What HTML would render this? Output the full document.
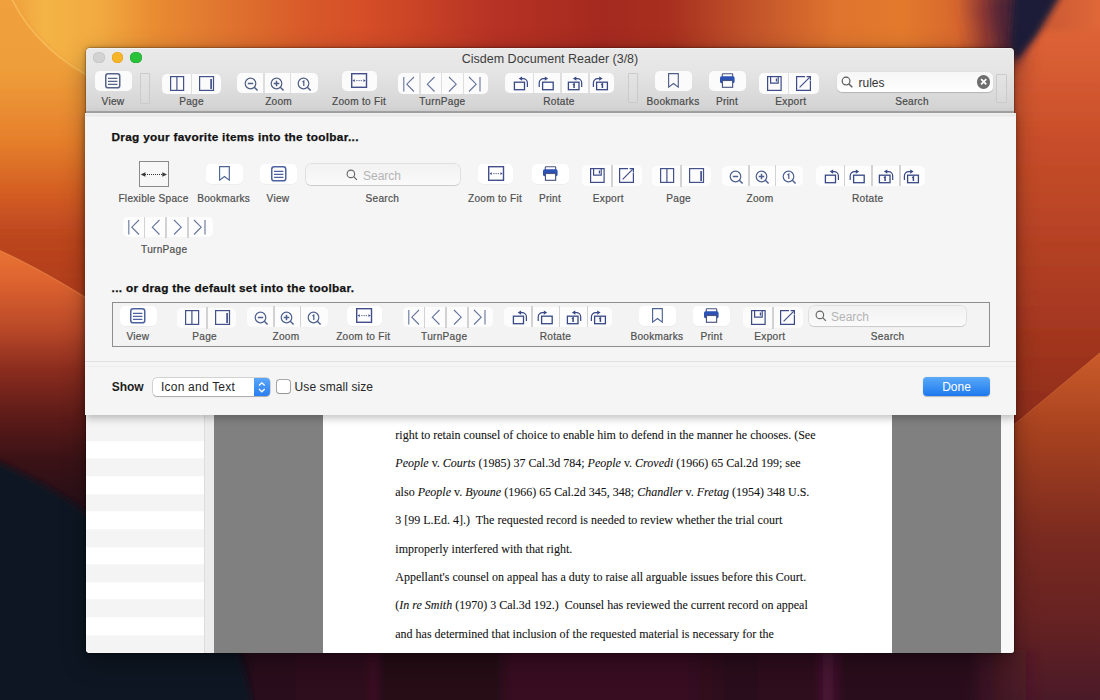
<!DOCTYPE html><html><head><meta charset="utf-8"><style>html,body{margin:0;padding:0;width:1100px;height:700px;overflow:hidden;position:relative;background:#c04020}*{box-sizing:border-box}</style></head><body>

<svg width="0" height="0" style="position:absolute">
<defs>
<symbol id="i-view" viewBox="0 0 16 16" overflow="visible"><rect x="0.75" y="0.75" width="14" height="14.1" rx="2.4" fill="none" stroke="currentColor" stroke-width="1.5"/><path d="M3 5.4H12.4M3 8.4H12.4M3 11.3H12.4" stroke="currentColor" stroke-width="1.2"/></symbol>
<symbol id="i-page1" viewBox="0 0 16 16" overflow="visible"><rect x="0.6" y="0.6" width="13" height="13.8" fill="none" stroke="currentColor" stroke-width="1.2"/><path d="M6.9 0.6V14.4" stroke="currentColor" stroke-width="1.2"/></symbol>
<symbol id="i-page2" viewBox="0 0 16 16" overflow="visible"><rect x="0.6" y="0.6" width="13.9" height="13.8" fill="none" stroke="currentColor" stroke-width="1.2"/><path d="M12.1 2.9V13" stroke="currentColor" stroke-width="1.7"/></symbol>
<symbol id="i-zoomout" viewBox="0 0 16 16" overflow="visible"><circle cx="6.5" cy="6.5" r="5.3" fill="none" stroke="currentColor" stroke-width="1.2"/><path d="M10.3 10.3L13.6 13.6" stroke="currentColor" stroke-width="1.45"/><path d="M3.8 6.5H9.2" stroke="currentColor" stroke-width="1.5"/></symbol>
<symbol id="i-zoomin" viewBox="0 0 16 16" overflow="visible"><circle cx="6.5" cy="6.5" r="5.3" fill="none" stroke="currentColor" stroke-width="1.2"/><path d="M10.3 10.3L13.6 13.6" stroke="currentColor" stroke-width="1.45"/><path d="M3.7 6.5H9.3M6.5 3.7V9.3" stroke="currentColor" stroke-width="1.5"/></symbol>
<symbol id="i-zoom1" viewBox="0 0 16 16" overflow="visible"><circle cx="6.5" cy="6.5" r="5.3" fill="none" stroke="currentColor" stroke-width="1.2"/><path d="M10.3 10.3L13.6 13.6" stroke="currentColor" stroke-width="1.45"/><path d="M5.5 4.9L6.8 4.1V9" fill="none" stroke="currentColor" stroke-width="1.25"/></symbol>
<symbol id="i-fit" viewBox="0 0 16 16" overflow="visible"><rect x="0.7" y="0.7" width="14.8" height="13.6" fill="none" stroke="currentColor" stroke-width="1.4"/><path d="M1.4 7.6L3.8 6.2V9Z M14.8 7.6L12.4 6.2V9Z" fill="currentColor"/><circle cx="5.9" cy="7.6" r="0.65" fill="currentColor"/><circle cx="8.1" cy="7.6" r="0.65" fill="currentColor"/><circle cx="10.3" cy="7.6" r="0.65" fill="currentColor"/></symbol>
<symbol id="i-first" viewBox="0 0 16 16" overflow="visible"><path d="M1.8 1V15.5" stroke="currentColor" stroke-width="1.1"/><path d="M12 1L4.8 8.2L12 15.5" fill="none" stroke="currentColor" stroke-width="1.1"/></symbol>
<symbol id="i-prev" viewBox="0 0 16 16" overflow="visible"><path d="M10.5 1L3.3 8.2L10.5 15.5" fill="none" stroke="currentColor" stroke-width="1.1"/></symbol>
<symbol id="i-next" viewBox="0 0 16 16" overflow="visible"><path d="M3 1L10.2 8.2L3 15.5" fill="none" stroke="currentColor" stroke-width="1.1"/></symbol>
<symbol id="i-last" viewBox="0 0 16 16" overflow="visible"><path d="M2 1L9.2 8.2L2 15.5" fill="none" stroke="currentColor" stroke-width="1.1"/><path d="M13 1V15.5" stroke="currentColor" stroke-width="1.1"/></symbol>
<symbol id="i-rotl" viewBox="0 0 16 16" overflow="visible"><rect x="2.4" y="7.2" width="10.1" height="7.5" fill="none" stroke="currentColor" stroke-width="1.3"/><path d="M9 3.6H11.1A4.3 4.3 0 0 1 15.4 7.9V12.1" fill="none" stroke="currentColor" stroke-width="1.2"/><path d="M6.7 3.6L10.1 1.5V5.7Z" fill="currentColor"/></symbol>
<symbol id="i-rotr" viewBox="0 0 16 16" overflow="visible"><rect x="4.6" y="7.2" width="10.6" height="7.5" fill="none" stroke="currentColor" stroke-width="1.3"/><path d="M1.2 12.1V7.9A4.3 4.3 0 0 1 5.5 3.6H7.4" fill="none" stroke="currentColor" stroke-width="1.2"/><path d="M10.2 3.6L6.8 1.5V5.7Z" fill="currentColor"/></symbol>
<symbol id="i-rotl1" viewBox="0 0 16 16" overflow="visible"><rect x="2.4" y="7.2" width="10.6" height="7.5" fill="none" stroke="currentColor" stroke-width="1.3"/><path d="M9 3.6H11.4A4.3 4.3 0 0 1 15.7 7.9V12.1" fill="none" stroke="currentColor" stroke-width="1.2"/><path d="M6.9 3.6L10.3 1.5V5.7Z" fill="currentColor"/><path d="M6.8 9.6L8.1 8.9V13" fill="none" stroke="currentColor" stroke-width="1.5"/></symbol>
<symbol id="i-rotr1" viewBox="0 0 16 16" overflow="visible"><rect x="4.6" y="7.2" width="10.8" height="7.5" fill="none" stroke="currentColor" stroke-width="1.3"/><path d="M1.4 12.1V7.9A4.3 4.3 0 0 1 5.7 3.6H7.6" fill="none" stroke="currentColor" stroke-width="1.2"/><path d="M10.6 3.6L7.2 1.5V5.7Z" fill="currentColor"/><path d="M9.1 9.6L10.4 8.9V13" fill="none" stroke="currentColor" stroke-width="1.5"/></symbol>
<symbol id="i-bookmark" viewBox="0 0 16 16" overflow="visible"><path d="M0.6 0.6H10.3V14.2L5.45 10.5L0.6 14.2Z" fill="none" stroke="currentColor" stroke-width="1.15" stroke-linejoin="miter"/></symbol>
<symbol id="i-print" viewBox="0 0 16 16" overflow="visible"><rect x="2.3" y="0.7" width="10.4" height="4" rx="0.6" fill="none" stroke="#4a5580" stroke-width="1.1"/><rect x="0" y="3.3" width="14.6" height="6.9" rx="1.6" fill="currentColor"/><rect x="2.45" y="7.5" width="10.2" height="6.8" fill="#ffffff" stroke="#4a5580" stroke-width="1.15"/></symbol>
<symbol id="i-save" viewBox="0 0 16 16" overflow="visible"><rect x="0.6" y="0.6" width="13.5" height="13.8" fill="none" stroke="currentColor" stroke-width="1.2"/><path d="M3.6 0.6V7.2H11.2V0.6" fill="none" stroke="currentColor" stroke-width="1.2"/><path d="M9.4 2.5V5.6" stroke="currentColor" stroke-width="1.2"/></symbol>
<symbol id="i-export" viewBox="0 0 16 16" overflow="visible"><path d="M9 0.6H0.6V14.4H14.4V4.6" fill="none" stroke="currentColor" stroke-width="1.2"/><path d="M3.6 11.4L13.6 1.4" stroke="currentColor" stroke-width="1.2"/><path d="M10.6 0.6H14.4V4" fill="none" stroke="currentColor" stroke-width="1.2"/></symbol>
<symbol id="i-mag" viewBox="0 0 16 16" overflow="visible"><circle cx="6.5" cy="6.5" r="5" fill="none" stroke="currentColor" stroke-width="1.5"/><path d="M10.2 10.2L14.5 14.5" stroke="currentColor" stroke-width="1.7"/></symbol>
</defs>
</svg>

<svg style="position:absolute;left:0;top:0" width="1100" height="700" viewBox="0 0 1100 700">
<defs>
<linearGradient id="gTop" x1="0" y1="0" x2="1100" y2="0" gradientUnits="userSpaceOnUse">
<stop offset="0" stop-color="#ee9a3a"/><stop offset="0.04" stop-color="#f4b446"/><stop offset="0.09" stop-color="#f2aa40"/><stop offset="0.14" stop-color="#e98c32"/>
<stop offset="0.2" stop-color="#e07630"/><stop offset="0.24" stop-color="#dc682c"/><stop offset="0.28" stop-color="#d8592a"/><stop offset="0.32" stop-color="#d65028"/><stop offset="0.36" stop-color="#cf4826"/><stop offset="0.45" stop-color="#b63224"/>
<stop offset="0.55" stop-color="#a5291f"/><stop offset="0.61" stop-color="#a8301f"/><stop offset="0.68" stop-color="#c0522a"/>
<stop offset="0.76" stop-color="#de742e"/><stop offset="0.82" stop-color="#e27a2c"/><stop offset="0.87" stop-color="#d8682e"/><stop offset="0.9" stop-color="#b44a30"/><stop offset="1" stop-color="#e06838"/>
</linearGradient>
<linearGradient id="gLeft" x1="0" y1="0" x2="0" y2="700" gradientUnits="userSpaceOnUse">
<stop offset="0" stop-color="#f0a03c"/><stop offset="0.1" stop-color="#ee9e3a"/><stop offset="0.2" stop-color="#e6802c"/><stop offset="0.28" stop-color="#d25c22"/><stop offset="0.34" stop-color="#bc461f"/><stop offset="0.42" stop-color="#b03c1e"/>
</linearGradient>
<linearGradient id="gLeft2" x1="0" y1="250" x2="0" y2="500" gradientUnits="userSpaceOnUse">
<stop offset="0" stop-color="#e87434"/><stop offset="0.12" stop-color="#de6430"/><stop offset="0.32" stop-color="#b84828"/><stop offset="0.48" stop-color="#8a2c1e"/><stop offset="0.68" stop-color="#5a1a18"/><stop offset="0.84" stop-color="#3a1216"/><stop offset="1" stop-color="#2a1018"/>
</linearGradient>
<linearGradient id="gRight" x1="0" y1="40" x2="0" y2="440" gradientUnits="userSpaceOnUse">
<stop offset="0" stop-color="#dc6236"/><stop offset="0.25" stop-color="#c84e2a"/><stop offset="0.7" stop-color="#a63820"/><stop offset="1" stop-color="#8a2a1a"/>
</linearGradient>
<linearGradient id="gRight2" x1="0" y1="340" x2="0" y2="700" gradientUnits="userSpaceOnUse">
<stop offset="0" stop-color="#d0602c"/><stop offset="0.25" stop-color="#a8421f"/><stop offset="0.55" stop-color="#7a2a20"/><stop offset="0.78" stop-color="#662222"/><stop offset="1" stop-color="#4a1a28"/>
</linearGradient>
<linearGradient id="gBot" x1="0" y1="0" x2="1100" y2="0" gradientUnits="userSpaceOnUse">
<stop offset="0" stop-color="#0a121e"/><stop offset="0.2" stop-color="#0c1420"/><stop offset="0.215" stop-color="#1a1020"/><stop offset="0.235" stop-color="#2c0e1c"/>
<stop offset="0.33" stop-color="#2e0e1c"/><stop offset="0.34" stop-color="#3a1222"/><stop offset="0.35" stop-color="#260a18"/><stop offset="0.45" stop-color="#260a18"/><stop offset="0.465" stop-color="#380c22"/>
<stop offset="0.62" stop-color="#380c22"/><stop offset="0.66" stop-color="#2c0c1c"/><stop offset="0.74" stop-color="#2e0c1e"/><stop offset="0.752" stop-color="#4a1434"/><stop offset="0.768" stop-color="#2a0c1c"/>
<stop offset="0.88" stop-color="#2c0e1c" stop-opacity="1"/><stop offset="0.95" stop-color="#4a1a28" stop-opacity="0"/><stop offset="1" stop-color="#4a1a28" stop-opacity="0"/>
</linearGradient>
<filter id="blur2" x="-20%" y="-20%" width="140%" height="140%"><feGaussianBlur stdDeviation="2"/></filter>
<filter id="blur3" x="-20%" y="-20%" width="140%" height="140%"><feGaussianBlur stdDeviation="3"/></filter>
<filter id="blur8" x="-50%" y="-50%" width="200%" height="200%"><feGaussianBlur stdDeviation="8"/></filter>
<filter id="blur12" x="-50%" y="-50%" width="200%" height="200%"><feGaussianBlur stdDeviation="12"/></filter>
</defs>
<rect x="0" y="0" width="1100" height="700" fill="url(#gTop)"/>
<path d="M-20 -10 H10 Q35 50 100 82 L120 92 V730 H-20 Z" fill="url(#gLeft)" filter="url(#blur2)"/>
<path d="M-20 242 Q40 266 120 320 V720 H-20Z" fill="url(#gLeft2)"/>
<path d="M-20 242 Q40 266 120 320" fill="none" stroke="#f39050" stroke-width="1.2" opacity="0.55"/>
<rect x="990" y="30" width="130" height="420" fill="url(#gRight)" filter="url(#blur3)"/>
<path d="M990 445 L1120 336 V720 H860 V640 H990Z" fill="url(#gRight2)"/>
<path d="M990 445 L1120 336" stroke="#e8844a" stroke-width="1" opacity="0.4"/>
<rect x="-20" y="650" width="1140" height="70" fill="url(#gBot)" filter="url(#blur2)"/>
<path d="M-40 447 Q40 474 120 537 L232 640 Q247 670 257 730 H-40Z" fill="#091322" filter="url(#blur3)"/>
<path d="M970 -10 L1030 -10 L1012 70 L990 70 Z" fill="#7e3234" filter="url(#blur12)"/>
<path d="M992 -10 L1030 -10 L1014 62 L1000 62 Z" fill="#4a2036" filter="url(#blur8)"/>
<path d="M1014 -10 L1064 -10 L1036 37 L1016 62 L1010 45 Z" fill="#1c1a38" filter="url(#blur3)"/>
<path d="M10 -5 Q35 50 100 82 L120 92" fill="none" stroke="#fbc868" stroke-width="1.6" opacity="0.6"/>
</svg>
<div style="position:absolute;left:86px;top:48px;width:928px;height:604.5px;border-radius:4px;box-shadow:0 0 0 0.5px rgba(0,0,0,0.3),0 0 5px rgba(0,0,0,0.3),0 8px 24px rgba(0,0,0,0.35)"></div>
<div style="position:absolute;left:86.00px;top:111.00px;width:928.00px;height:541.50px;background:#ffffff;border-radius:0 0 4px 4px;overflow:hidden"></div>
<div style="position:absolute;left:86px;top:111px;width:118px;height:541.5px;background:repeating-linear-gradient(to bottom,#f4f4f4 0px,#f4f4f4 17.65px,#ffffff 17.65px,#ffffff 35.3px);background-position:0 312.3px;border-radius:0 0 0 4px;border-bottom:1px solid #fafafa"></div>
<div style="position:absolute;left:204.00px;top:111.00px;width:1.00px;height:541.50px;background:#dcdcdc"></div>
<div style="position:absolute;left:205.00px;top:111.00px;width:9.00px;height:541.50px;background:#ececec"></div>
<div style="position:absolute;left:214.00px;top:111.00px;width:109.00px;height:541.50px;background:#808080"></div>
<div style="position:absolute;left:323.00px;top:111.00px;width:569.00px;height:541.50px;background:#ffffff"></div>
<div style="position:absolute;left:892.00px;top:111.00px;width:109.00px;height:541.50px;background:#808080"></div>
<div style="position:absolute;left:1001.00px;top:111.00px;width:13.00px;height:541.50px;background:#f8f8f8;border-radius:0 0 3px 0"></div>
<div style="position:absolute;left:395.30px;top:428.95px;font:normal 12px/12px 'Liberation Serif', serif;color:#111111;white-space:pre;-webkit-text-stroke:0.08px #111">right to retain counsel of choice to enable him to defend in the manner he chooses. (See</div>
<div style="position:absolute;left:395.30px;top:457.35px;font:normal 12px/12px 'Liberation Serif', serif;color:#111111;white-space:pre;-webkit-text-stroke:0.08px #111"><i>People</i> v. <i>Courts</i> (1985) 37 Cal.3d 784; <i>People</i> v. <i>Crovedi</i> (1966) 65 Cal.2d 199; see</div>
<div style="position:absolute;left:395.30px;top:485.75px;font:normal 12px/12px 'Liberation Serif', serif;color:#111111;white-space:pre;-webkit-text-stroke:0.08px #111">also <i>People</i> v. <i>Byoune</i> (1966) 65 Cal.2d 345, 348; <i>Chandler</i> v. <i>Fretag</i> (1954) 348 U.S.</div>
<div style="position:absolute;left:395.30px;top:514.15px;font:normal 12px/12px 'Liberation Serif', serif;color:#111111;white-space:pre;-webkit-text-stroke:0.08px #111">3 [99 L.Ed. 4].)  The requested record is needed to review whether the trial court</div>
<div style="position:absolute;left:395.30px;top:542.55px;font:normal 12px/12px 'Liberation Serif', serif;color:#111111;white-space:pre;-webkit-text-stroke:0.08px #111">improperly interfered with that right.</div>
<div style="position:absolute;left:395.30px;top:570.95px;font:normal 12px/12px 'Liberation Serif', serif;color:#111111;white-space:pre;-webkit-text-stroke:0.08px #111">Appellant&#39;s counsel on appeal has a duty to raise all arguable issues before this Court.</div>
<div style="position:absolute;left:395.30px;top:599.35px;font:normal 12px/12px 'Liberation Serif', serif;color:#111111;white-space:pre;-webkit-text-stroke:0.08px #111">(<i>In re Smith</i> (1970) 3 Cal.3d 192.)  Counsel has reviewed the current record on appeal</div>
<div style="position:absolute;left:395.30px;top:627.75px;font:normal 12px/12px 'Liberation Serif', serif;color:#111111;white-space:pre;-webkit-text-stroke:0.08px #111">and has determined that inclusion of the requested material is necessary for the</div>
<div style="position:absolute;left:86.00px;top:48.00px;width:928.00px;height:65.00px;background:linear-gradient(to bottom,#f6f6f6 0px,#e9e9e9 1.5px,#e6e6e6 20px,#d9d9d9 50px,#d2d2d2 63px);border-radius:4px 4px 0 0;border-bottom:2px solid #a6a6a6"></div>
<div style="position:absolute;left:93.45px;top:51.75px;width:11.5px;height:11.5px;border-radius:50%;background:#d2d2d2;box-shadow:inset 0 0 0 0.6px #c2c2c2"></div>
<div style="position:absolute;left:111.85px;top:51.75px;width:11.5px;height:11.5px;border-radius:50%;background:#f7b52a;box-shadow:inset 0 0 0 0.6px #e6a01c"></div>
<div style="position:absolute;left:130.25px;top:51.75px;width:11.5px;height:11.5px;border-radius:50%;background:#2bc23b;box-shadow:inset 0 0 0 0.6px #20a82e"></div>
<div style="position:absolute;left:350.00px;width:400px;top:52.72px;font:normal 12.5px/12.5px 'Liberation Sans', sans-serif;color:#3c3c3c;text-align:center;white-space:nowrap;">Cisdem Document Reader (3/8)</div>
<div style="position:absolute;left:95.00px;top:71.00px;width:36.50px;height:20.00px;background:#fbfbfb;border-radius:5px;"></div>
<svg style="position:absolute;left:105.20px;top:73.00px;overflow:visible" width="16.00" height="16.00" viewBox="0 0 16 16"><use href="#i-view" style="color:#56648a"/></svg>
<div style="position:absolute;left:-87.00px;width:400px;top:96.75px;font:normal 10.1px/10.1px 'Liberation Sans', sans-serif;color:#4a4a4a;text-align:center;white-space:nowrap;-webkit-text-stroke:0.2px #4a4a4a;letter-spacing:0.28px">View</div>
<div style="position:absolute;left:162.00px;top:73.50px;width:59.00px;height:20.50px;background:#fbfbfb;border-radius:5px;"></div>
<div style="position:absolute;left:190.85px;top:73.50px;width:1.30px;height:20.50px;background:#dedede"></div>
<svg style="position:absolute;left:169.75px;top:76.00px;overflow:visible" width="16.00" height="16.00" viewBox="0 0 16 16"><use href="#i-page1" style="color:#44528a"/></svg>
<svg style="position:absolute;left:199.25px;top:76.00px;overflow:visible" width="16.00" height="16.00" viewBox="0 0 16 16"><use href="#i-page2" style="color:#44528a"/></svg>
<div style="position:absolute;left:-8.50px;width:400px;top:96.75px;font:normal 10.1px/10.1px 'Liberation Sans', sans-serif;color:#4a4a4a;text-align:center;white-space:nowrap;-webkit-text-stroke:0.2px #4a4a4a;letter-spacing:0.28px">Page</div>
<div style="position:absolute;left:237.00px;top:73.00px;width:81.00px;height:20.00px;background:#fbfbfb;border-radius:5px;"></div>
<div style="position:absolute;left:263.35px;top:73.00px;width:1.30px;height:20.00px;background:#dedede"></div>
<div style="position:absolute;left:289.85px;top:73.00px;width:1.30px;height:20.00px;background:#dedede"></div>
<svg style="position:absolute;left:244.20px;top:76.60px;overflow:visible" width="16.00" height="16.00" viewBox="0 0 16 16"><use href="#i-zoomout" style="color:#4f5e86"/></svg>
<svg style="position:absolute;left:270.00px;top:76.60px;overflow:visible" width="16.00" height="16.00" viewBox="0 0 16 16"><use href="#i-zoomin" style="color:#4f5e86"/></svg>
<svg style="position:absolute;left:296.80px;top:76.60px;overflow:visible" width="16.00" height="16.00" viewBox="0 0 16 16"><use href="#i-zoom1" style="color:#4f5e86"/></svg>
<div style="position:absolute;left:78.60px;width:400px;top:96.75px;font:normal 10.1px/10.1px 'Liberation Sans', sans-serif;color:#4a4a4a;text-align:center;white-space:nowrap;-webkit-text-stroke:0.2px #4a4a4a;letter-spacing:0.28px">Zoom</div>
<div style="position:absolute;left:341.50px;top:71.10px;width:35.00px;height:19.80px;background:#fbfbfb;border-radius:5px;"></div>
<svg style="position:absolute;left:351.10px;top:73.30px;overflow:visible" width="16.00" height="16.00" viewBox="0 0 16 16"><use href="#i-fit" style="color:#424f8a"/></svg>
<div style="position:absolute;left:159.00px;width:400px;top:96.75px;font:normal 10.1px/10.1px 'Liberation Sans', sans-serif;color:#4a4a4a;text-align:center;white-space:nowrap;-webkit-text-stroke:0.2px #4a4a4a;letter-spacing:0.28px">Zoom to Fit</div>
<div style="position:absolute;left:398.00px;top:73.30px;width:90.00px;height:20.40px;background:#fbfbfb;border-radius:5px;"></div>
<div style="position:absolute;left:419.35px;top:73.30px;width:1.30px;height:20.40px;background:#dedede"></div>
<div style="position:absolute;left:440.85px;top:73.30px;width:1.30px;height:20.40px;background:#dedede"></div>
<div style="position:absolute;left:462.85px;top:73.30px;width:1.30px;height:20.40px;background:#dedede"></div>
<svg style="position:absolute;left:402.00px;top:75.50px;overflow:visible" width="16.00" height="16.00" viewBox="0 0 16 16"><use href="#i-first" style="color:#66749a"/></svg>
<svg style="position:absolute;left:424.00px;top:75.50px;overflow:visible" width="16.00" height="16.00" viewBox="0 0 16 16"><use href="#i-prev" style="color:#66749a"/></svg>
<svg style="position:absolute;left:446.00px;top:75.50px;overflow:visible" width="16.00" height="16.00" viewBox="0 0 16 16"><use href="#i-next" style="color:#66749a"/></svg>
<svg style="position:absolute;left:467.00px;top:75.50px;overflow:visible" width="16.00" height="16.00" viewBox="0 0 16 16"><use href="#i-last" style="color:#66749a"/></svg>
<div style="position:absolute;left:242.40px;width:400px;top:96.75px;font:normal 10.1px/10.1px 'Liberation Sans', sans-serif;color:#4a4a4a;text-align:center;white-space:nowrap;-webkit-text-stroke:0.2px #4a4a4a;letter-spacing:0.28px">TurnPage</div>
<div style="position:absolute;left:505.00px;top:73.00px;width:108.50px;height:20.30px;background:#fbfbfb;border-radius:5px;"></div>
<div style="position:absolute;left:532.65px;top:73.00px;width:1.30px;height:20.30px;background:#dedede"></div>
<div style="position:absolute;left:560.35px;top:73.00px;width:1.30px;height:20.30px;background:#dedede"></div>
<div style="position:absolute;left:588.35px;top:73.00px;width:1.30px;height:20.30px;background:#dedede"></div>
<svg style="position:absolute;left:512.00px;top:75.00px;overflow:visible" width="16.00" height="16.00" viewBox="0 0 16 16"><use href="#i-rotl" style="color:#374885"/></svg>
<svg style="position:absolute;left:538.00px;top:75.00px;overflow:visible" width="16.00" height="16.00" viewBox="0 0 16 16"><use href="#i-rotr" style="color:#374885"/></svg>
<svg style="position:absolute;left:566.30px;top:75.00px;overflow:visible" width="16.00" height="16.00" viewBox="0 0 16 16"><use href="#i-rotl1" style="color:#374885"/></svg>
<svg style="position:absolute;left:591.50px;top:75.00px;overflow:visible" width="16.00" height="16.00" viewBox="0 0 16 16"><use href="#i-rotr1" style="color:#374885"/></svg>
<div style="position:absolute;left:359.00px;width:400px;top:96.75px;font:normal 10.1px/10.1px 'Liberation Sans', sans-serif;color:#4a4a4a;text-align:center;white-space:nowrap;-webkit-text-stroke:0.2px #4a4a4a;letter-spacing:0.28px">Rotate</div>
<div style="position:absolute;left:655.00px;top:71.00px;width:37.00px;height:20.00px;background:#fbfbfb;border-radius:5px;"></div>
<svg style="position:absolute;left:668.20px;top:73.30px;overflow:visible" width="16.00" height="16.00" viewBox="0 0 16 16"><use href="#i-bookmark" style="color:#4f6088"/></svg>
<div style="position:absolute;left:473.00px;width:400px;top:96.75px;font:normal 10.1px/10.1px 'Liberation Sans', sans-serif;color:#4a4a4a;text-align:center;white-space:nowrap;-webkit-text-stroke:0.2px #4a4a4a;letter-spacing:0.28px">Bookmarks</div>
<div style="position:absolute;left:709.00px;top:71.00px;width:37.00px;height:20.00px;background:#fbfbfb;border-radius:5px;"></div>
<svg style="position:absolute;left:720.20px;top:73.00px;overflow:visible" width="16.00" height="16.00" viewBox="0 0 16 16"><use href="#i-print" style="color:#2c52b6"/></svg>
<div style="position:absolute;left:527.00px;width:400px;top:96.75px;font:normal 10.1px/10.1px 'Liberation Sans', sans-serif;color:#4a4a4a;text-align:center;white-space:nowrap;-webkit-text-stroke:0.2px #4a4a4a;letter-spacing:0.28px">Print</div>
<div style="position:absolute;left:759.00px;top:73.00px;width:59.50px;height:21.30px;background:#fbfbfb;border-radius:5px;"></div>
<div style="position:absolute;left:788.15px;top:73.00px;width:1.30px;height:21.30px;background:#dedede"></div>
<svg style="position:absolute;left:767.10px;top:76.10px;overflow:visible" width="16.00" height="16.00" viewBox="0 0 16 16"><use href="#i-save" style="color:#3d4c88"/></svg>
<svg style="position:absolute;left:796.00px;top:76.10px;overflow:visible" width="16.00" height="16.00" viewBox="0 0 16 16"><use href="#i-export" style="color:#3d4c88"/></svg>
<div style="position:absolute;left:590.80px;width:400px;top:96.75px;font:normal 10.1px/10.1px 'Liberation Sans', sans-serif;color:#4a4a4a;text-align:center;white-space:nowrap;-webkit-text-stroke:0.2px #4a4a4a;letter-spacing:0.28px">Export</div>
<div style="position:absolute;left:140.00px;top:73.00px;width:10.00px;height:30.50px;border:1px solid #cbcbcb;background:rgba(255,255,255,0.06);border-radius:1px"></div>
<div style="position:absolute;left:628.30px;top:73.00px;width:9.70px;height:30.40px;border:1px solid #cbcbcb;background:rgba(255,255,255,0.06);border-radius:1px"></div>
<div style="position:absolute;left:836.5px;top:71.8px;width:156px;height:20.2px;border-radius:5px;background:linear-gradient(#f6f6f6,#ffffff);box-shadow:0 0.5px 1px rgba(0,0,0,0.18)"></div>
<svg style="position:absolute;left:841.26px;top:76.06px" width="12.48" height="12.48" viewBox="0 0 16 16"><use href="#i-mag" style="color:#555555"/></svg>
<div style="position:absolute;left:858.50px;top:76.64px;font:normal 12px/12px 'Liberation Sans', sans-serif;color:#333333;white-space:pre;">rules</div>
<div style="position:absolute;left:976.7px;top:75.4px;width:13.4px;height:13.4px;border-radius:50%;background:#6e6e6e"></div>
<svg style="position:absolute;left:976.7px;top:75.4px" width="13.4" height="13.4" viewBox="0 0 14 14"><path d="M4.3 4.3L9.7 9.7M9.7 4.3L4.3 9.7" stroke="#fff" stroke-width="1.8"/></svg>
<div style="position:absolute;left:712.00px;width:400px;top:96.75px;font:normal 10.1px/10.1px 'Liberation Sans', sans-serif;color:#4a4a4a;text-align:center;white-space:nowrap;-webkit-text-stroke:0.2px #4a4a4a;letter-spacing:0.28px">Search</div>
<div style="position:absolute;left:995.50px;top:73.50px;width:11.50px;height:29.50px;border:1px solid #cbcbcb;background:rgba(255,255,255,0.06);border-radius:1px"></div>
<div style="position:absolute;left:85px;top:113px;width:930.5px;height:301.8px;background:linear-gradient(#ececec 0px,#f2f2f2 1px,#e8e8e8 2.5px,#f5f5f5 4px,#f5f5f5 100%);box-shadow:0 3px 8px rgba(0,0,0,0.25)"></div>
<div style="position:absolute;left:111.50px;top:132.01px;font:bold 11.8px/11.8px 'Liberation Sans', sans-serif;color:#111111;white-space:pre;letter-spacing:0.3px;-webkit-text-stroke:0.25px #111">Drag your favorite items into the toolbar...</div>
<div style="position:absolute;left:139px;top:160.7px;width:29.7px;height:26.4px;border:1px solid #8a8a8a;background:#f7f7f7"></div>
<svg style="position:absolute;left:139px;top:160.7px" width="30" height="27" viewBox="0 0 30 27"><path d="M6 13.5H24" stroke="#333" stroke-width="1.1" stroke-dasharray="1 1"/><path d="M1.7 13.5L6.4 11.3V15.7Z M28 13.5L23.3 11.3V15.7Z" fill="#3a3a3a"/></svg>
<div style="position:absolute;left:-46.50px;width:400px;top:193.65px;font:normal 10.1px/10.1px 'Liberation Sans', sans-serif;color:#505050;text-align:center;white-space:nowrap;-webkit-text-stroke:0.2px #505050;letter-spacing:0.28px">Flexible Space</div>
<div style="position:absolute;left:205.60px;top:164.10px;width:37.00px;height:20.00px;background:#ffffff;border-radius:5px;box-shadow:0 0.5px 0.5px rgba(0,0,0,0.06)"></div>
<svg style="position:absolute;left:218.80px;top:166.40px;overflow:visible" width="16.00" height="16.00" viewBox="0 0 16 16"><use href="#i-bookmark" style="color:#4d6494"/></svg>
<div style="position:absolute;left:23.70px;width:400px;top:193.65px;font:normal 10.1px/10.1px 'Liberation Sans', sans-serif;color:#505050;text-align:center;white-space:nowrap;-webkit-text-stroke:0.2px #505050;letter-spacing:0.28px">Bookmarks</div>
<div style="position:absolute;left:260.40px;top:163.90px;width:36.50px;height:20.00px;background:#ffffff;border-radius:5px;box-shadow:0 0.5px 0.5px rgba(0,0,0,0.06)"></div>
<svg style="position:absolute;left:270.60px;top:165.90px;overflow:visible" width="16.00" height="16.00" viewBox="0 0 16 16"><use href="#i-view" style="color:#4d62a0"/></svg>
<div style="position:absolute;left:78.00px;width:400px;top:193.65px;font:normal 10.1px/10.1px 'Liberation Sans', sans-serif;color:#505050;text-align:center;white-space:nowrap;-webkit-text-stroke:0.2px #505050;letter-spacing:0.28px">View</div>
<div style="position:absolute;left:478.40px;top:163.80px;width:35.00px;height:19.80px;background:#ffffff;border-radius:5px;box-shadow:0 0.5px 0.5px rgba(0,0,0,0.06)"></div>
<svg style="position:absolute;left:488.00px;top:166.00px;overflow:visible" width="16.00" height="16.00" viewBox="0 0 16 16"><use href="#i-fit" style="color:#424f8a"/></svg>
<div style="position:absolute;left:295.00px;width:400px;top:193.65px;font:normal 10.1px/10.1px 'Liberation Sans', sans-serif;color:#505050;text-align:center;white-space:nowrap;-webkit-text-stroke:0.2px #505050;letter-spacing:0.28px">Zoom to Fit</div>
<div style="position:absolute;left:531.60px;top:163.90px;width:37.00px;height:20.00px;background:#ffffff;border-radius:5px;box-shadow:0 0.5px 0.5px rgba(0,0,0,0.06)"></div>
<svg style="position:absolute;left:542.80px;top:165.90px;overflow:visible" width="16.00" height="16.00" viewBox="0 0 16 16"><use href="#i-print" style="color:#2c52b6"/></svg>
<div style="position:absolute;left:350.00px;width:400px;top:193.65px;font:normal 10.1px/10.1px 'Liberation Sans', sans-serif;color:#505050;text-align:center;white-space:nowrap;-webkit-text-stroke:0.2px #505050;letter-spacing:0.28px">Print</div>
<div style="position:absolute;left:582.00px;top:165.20px;width:59.50px;height:21.30px;background:rgba(255,255,255,0.75);border-radius:5px;"></div>
<div style="position:absolute;left:611.00px;top:164.70px;width:1.60px;height:22.30px;background:#d2d2d2"></div>
<svg style="position:absolute;left:590.10px;top:168.30px;overflow:visible" width="16.00" height="16.00" viewBox="0 0 16 16"><use href="#i-save" style="color:#3d4c88"/></svg>
<svg style="position:absolute;left:619.00px;top:168.30px;overflow:visible" width="16.00" height="16.00" viewBox="0 0 16 16"><use href="#i-export" style="color:#3d4c88"/></svg>
<div style="position:absolute;left:408.30px;width:400px;top:193.65px;font:normal 10.1px/10.1px 'Liberation Sans', sans-serif;color:#505050;text-align:center;white-space:nowrap;-webkit-text-stroke:0.2px #505050;letter-spacing:0.28px">Export</div>
<div style="position:absolute;left:651.75px;top:165.80px;width:59.00px;height:20.50px;background:rgba(255,255,255,0.75);border-radius:5px;"></div>
<div style="position:absolute;left:680.45px;top:165.30px;width:1.60px;height:21.50px;background:#d2d2d2"></div>
<svg style="position:absolute;left:659.50px;top:168.30px;overflow:visible" width="16.00" height="16.00" viewBox="0 0 16 16"><use href="#i-page1" style="color:#44528a"/></svg>
<svg style="position:absolute;left:689.00px;top:168.30px;overflow:visible" width="16.00" height="16.00" viewBox="0 0 16 16"><use href="#i-page2" style="color:#44528a"/></svg>
<div style="position:absolute;left:478.60px;width:400px;top:193.65px;font:normal 10.1px/10.1px 'Liberation Sans', sans-serif;color:#505050;text-align:center;white-space:nowrap;-webkit-text-stroke:0.2px #505050;letter-spacing:0.28px">Page</div>
<div style="position:absolute;left:721.80px;top:165.90px;width:81.00px;height:20.00px;background:rgba(255,255,255,0.75);border-radius:5px;"></div>
<div style="position:absolute;left:748.00px;top:165.40px;width:1.60px;height:21.00px;background:#d2d2d2"></div>
<div style="position:absolute;left:774.50px;top:165.40px;width:1.60px;height:21.00px;background:#d2d2d2"></div>
<svg style="position:absolute;left:729.00px;top:169.50px;overflow:visible" width="16.00" height="16.00" viewBox="0 0 16 16"><use href="#i-zoomout" style="color:#4d6090"/></svg>
<svg style="position:absolute;left:754.80px;top:169.50px;overflow:visible" width="16.00" height="16.00" viewBox="0 0 16 16"><use href="#i-zoomin" style="color:#4d6090"/></svg>
<svg style="position:absolute;left:781.60px;top:169.50px;overflow:visible" width="16.00" height="16.00" viewBox="0 0 16 16"><use href="#i-zoom1" style="color:#4d6090"/></svg>
<div style="position:absolute;left:560.00px;width:400px;top:193.65px;font:normal 10.1px/10.1px 'Liberation Sans', sans-serif;color:#505050;text-align:center;white-space:nowrap;-webkit-text-stroke:0.2px #505050;letter-spacing:0.28px">Zoom</div>
<div style="position:absolute;left:816.00px;top:165.50px;width:108.50px;height:20.30px;background:rgba(255,255,255,0.75);border-radius:5px;"></div>
<div style="position:absolute;left:843.50px;top:165.00px;width:1.60px;height:21.30px;background:#d2d2d2"></div>
<div style="position:absolute;left:871.20px;top:165.00px;width:1.60px;height:21.30px;background:#d2d2d2"></div>
<div style="position:absolute;left:899.20px;top:165.00px;width:1.60px;height:21.30px;background:#d2d2d2"></div>
<svg style="position:absolute;left:823.00px;top:167.50px;overflow:visible" width="16.00" height="16.00" viewBox="0 0 16 16"><use href="#i-rotl" style="color:#374885"/></svg>
<svg style="position:absolute;left:849.00px;top:167.50px;overflow:visible" width="16.00" height="16.00" viewBox="0 0 16 16"><use href="#i-rotr" style="color:#374885"/></svg>
<svg style="position:absolute;left:877.30px;top:167.50px;overflow:visible" width="16.00" height="16.00" viewBox="0 0 16 16"><use href="#i-rotl1" style="color:#374885"/></svg>
<svg style="position:absolute;left:902.50px;top:167.50px;overflow:visible" width="16.00" height="16.00" viewBox="0 0 16 16"><use href="#i-rotr1" style="color:#374885"/></svg>
<div style="position:absolute;left:667.70px;width:400px;top:193.65px;font:normal 10.1px/10.1px 'Liberation Sans', sans-serif;color:#505050;text-align:center;white-space:nowrap;-webkit-text-stroke:0.2px #505050;letter-spacing:0.28px">Rotate</div>
<div style="position:absolute;left:305.8px;top:164.2px;width:153.8px;height:21.3px;border-radius:5px;background:linear-gradient(#f2f2f2,#fafafa);box-shadow:0 0 0 0.5px rgba(0,0,0,0.15),0 0.5px 1px rgba(0,0,0,0.1)"></div>
<svg style="position:absolute;left:346.00px;top:169.20px" width="12.00" height="12.00" viewBox="0 0 16 16"><use href="#i-mag" style="color:#666666"/></svg>
<div style="position:absolute;left:363.00px;top:169.64px;font:normal 12px/12px 'Liberation Sans', sans-serif;color:#b4b4b4;white-space:pre;">Search</div>
<div style="position:absolute;left:182.40px;width:400px;top:193.65px;font:normal 10.1px/10.1px 'Liberation Sans', sans-serif;color:#505050;text-align:center;white-space:nowrap;-webkit-text-stroke:0.2px #505050;letter-spacing:0.28px">Search</div>
<div style="position:absolute;left:122.60px;top:217.10px;width:90.00px;height:20.40px;background:rgba(255,255,255,0.75);border-radius:5px;"></div>
<div style="position:absolute;left:143.80px;top:216.60px;width:1.60px;height:21.40px;background:#d2d2d2"></div>
<div style="position:absolute;left:165.30px;top:216.60px;width:1.60px;height:21.40px;background:#d2d2d2"></div>
<div style="position:absolute;left:187.30px;top:216.60px;width:1.60px;height:21.40px;background:#d2d2d2"></div>
<svg style="position:absolute;left:126.60px;top:219.30px;overflow:visible" width="16.00" height="16.00" viewBox="0 0 16 16"><use href="#i-first" style="color:#66749a"/></svg>
<svg style="position:absolute;left:148.60px;top:219.30px;overflow:visible" width="16.00" height="16.00" viewBox="0 0 16 16"><use href="#i-prev" style="color:#66749a"/></svg>
<svg style="position:absolute;left:170.60px;top:219.30px;overflow:visible" width="16.00" height="16.00" viewBox="0 0 16 16"><use href="#i-next" style="color:#66749a"/></svg>
<svg style="position:absolute;left:191.60px;top:219.30px;overflow:visible" width="16.00" height="16.00" viewBox="0 0 16 16"><use href="#i-last" style="color:#66749a"/></svg>
<div style="position:absolute;left:-35.80px;width:400px;top:245.05px;font:normal 10.1px/10.1px 'Liberation Sans', sans-serif;color:#505050;text-align:center;white-space:nowrap;-webkit-text-stroke:0.2px #505050;letter-spacing:0.28px">TurnPage</div>
<div style="position:absolute;left:111.60px;top:282.81px;font:bold 11.8px/11.8px 'Liberation Sans', sans-serif;color:#111111;white-space:pre;letter-spacing:0.31px;-webkit-text-stroke:0.25px #111">... or drag the default set into the toolbar.</div>
<div style="position:absolute;left:111.5px;top:302.1px;width:878px;height:44.6px;border:1.2px solid #8e8e8e;background:#f3f3f3"></div>
<div style="position:absolute;left:120.20px;top:306.00px;width:36.50px;height:20.00px;background:#ffffff;border-radius:5px;box-shadow:0 0.5px 0.5px rgba(0,0,0,0.06)"></div>
<svg style="position:absolute;left:130.40px;top:308.00px;overflow:visible" width="16.00" height="16.00" viewBox="0 0 16 16"><use href="#i-view" style="color:#4d62a0"/></svg>
<div style="position:absolute;left:-62.20px;width:400px;top:331.65px;font:normal 10.1px/10.1px 'Liberation Sans', sans-serif;color:#505050;text-align:center;white-space:nowrap;-webkit-text-stroke:0.2px #505050;letter-spacing:0.28px">View</div>
<div style="position:absolute;left:177.25px;top:307.50px;width:59.00px;height:20.50px;background:rgba(255,255,255,0.75);border-radius:5px;"></div>
<div style="position:absolute;left:205.95px;top:307.00px;width:1.60px;height:21.50px;background:#d2d2d2"></div>
<svg style="position:absolute;left:185.00px;top:310.00px;overflow:visible" width="16.00" height="16.00" viewBox="0 0 16 16"><use href="#i-page1" style="color:#44528a"/></svg>
<svg style="position:absolute;left:214.50px;top:310.00px;overflow:visible" width="16.00" height="16.00" viewBox="0 0 16 16"><use href="#i-page2" style="color:#44528a"/></svg>
<div style="position:absolute;left:4.60px;width:400px;top:331.65px;font:normal 10.1px/10.1px 'Liberation Sans', sans-serif;color:#505050;text-align:center;white-space:nowrap;-webkit-text-stroke:0.2px #505050;letter-spacing:0.28px">Page</div>
<div style="position:absolute;left:247.00px;top:306.90px;width:81.00px;height:20.00px;background:rgba(255,255,255,0.75);border-radius:5px;"></div>
<div style="position:absolute;left:273.20px;top:306.40px;width:1.60px;height:21.00px;background:#d2d2d2"></div>
<div style="position:absolute;left:299.70px;top:306.40px;width:1.60px;height:21.00px;background:#d2d2d2"></div>
<svg style="position:absolute;left:254.20px;top:310.50px;overflow:visible" width="16.00" height="16.00" viewBox="0 0 16 16"><use href="#i-zoomout" style="color:#4d6090"/></svg>
<svg style="position:absolute;left:280.00px;top:310.50px;overflow:visible" width="16.00" height="16.00" viewBox="0 0 16 16"><use href="#i-zoomin" style="color:#4d6090"/></svg>
<svg style="position:absolute;left:306.80px;top:310.50px;overflow:visible" width="16.00" height="16.00" viewBox="0 0 16 16"><use href="#i-zoom1" style="color:#4d6090"/></svg>
<div style="position:absolute;left:86.00px;width:400px;top:331.65px;font:normal 10.1px/10.1px 'Liberation Sans', sans-serif;color:#505050;text-align:center;white-space:nowrap;-webkit-text-stroke:0.2px #505050;letter-spacing:0.28px">Zoom</div>
<div style="position:absolute;left:346.50px;top:305.90px;width:35.00px;height:19.80px;background:#ffffff;border-radius:5px;box-shadow:0 0.5px 0.5px rgba(0,0,0,0.06)"></div>
<svg style="position:absolute;left:356.10px;top:308.10px;overflow:visible" width="16.00" height="16.00" viewBox="0 0 16 16"><use href="#i-fit" style="color:#424f8a"/></svg>
<div style="position:absolute;left:163.20px;width:400px;top:331.65px;font:normal 10.1px/10.1px 'Liberation Sans', sans-serif;color:#505050;text-align:center;white-space:nowrap;-webkit-text-stroke:0.2px #505050;letter-spacing:0.28px">Zoom to Fit</div>
<div style="position:absolute;left:402.60px;top:307.00px;width:90.00px;height:20.40px;background:rgba(255,255,255,0.75);border-radius:5px;"></div>
<div style="position:absolute;left:423.80px;top:306.50px;width:1.60px;height:21.40px;background:#d2d2d2"></div>
<div style="position:absolute;left:445.30px;top:306.50px;width:1.60px;height:21.40px;background:#d2d2d2"></div>
<div style="position:absolute;left:467.30px;top:306.50px;width:1.60px;height:21.40px;background:#d2d2d2"></div>
<svg style="position:absolute;left:406.60px;top:309.20px;overflow:visible" width="16.00" height="16.00" viewBox="0 0 16 16"><use href="#i-first" style="color:#66749a"/></svg>
<svg style="position:absolute;left:428.60px;top:309.20px;overflow:visible" width="16.00" height="16.00" viewBox="0 0 16 16"><use href="#i-prev" style="color:#66749a"/></svg>
<svg style="position:absolute;left:450.60px;top:309.20px;overflow:visible" width="16.00" height="16.00" viewBox="0 0 16 16"><use href="#i-next" style="color:#66749a"/></svg>
<svg style="position:absolute;left:471.60px;top:309.20px;overflow:visible" width="16.00" height="16.00" viewBox="0 0 16 16"><use href="#i-last" style="color:#66749a"/></svg>
<div style="position:absolute;left:244.20px;width:400px;top:331.65px;font:normal 10.1px/10.1px 'Liberation Sans', sans-serif;color:#505050;text-align:center;white-space:nowrap;-webkit-text-stroke:0.2px #505050;letter-spacing:0.28px">TurnPage</div>
<div style="position:absolute;left:503.60px;top:306.60px;width:108.50px;height:20.30px;background:rgba(255,255,255,0.75);border-radius:5px;"></div>
<div style="position:absolute;left:531.10px;top:306.10px;width:1.60px;height:21.30px;background:#d2d2d2"></div>
<div style="position:absolute;left:558.80px;top:306.10px;width:1.60px;height:21.30px;background:#d2d2d2"></div>
<div style="position:absolute;left:586.80px;top:306.10px;width:1.60px;height:21.30px;background:#d2d2d2"></div>
<svg style="position:absolute;left:510.60px;top:308.60px;overflow:visible" width="16.00" height="16.00" viewBox="0 0 16 16"><use href="#i-rotl" style="color:#374885"/></svg>
<svg style="position:absolute;left:536.60px;top:308.60px;overflow:visible" width="16.00" height="16.00" viewBox="0 0 16 16"><use href="#i-rotr" style="color:#374885"/></svg>
<svg style="position:absolute;left:564.90px;top:308.60px;overflow:visible" width="16.00" height="16.00" viewBox="0 0 16 16"><use href="#i-rotl1" style="color:#374885"/></svg>
<svg style="position:absolute;left:590.10px;top:308.60px;overflow:visible" width="16.00" height="16.00" viewBox="0 0 16 16"><use href="#i-rotr1" style="color:#374885"/></svg>
<div style="position:absolute;left:355.50px;width:400px;top:331.65px;font:normal 10.1px/10.1px 'Liberation Sans', sans-serif;color:#505050;text-align:center;white-space:nowrap;-webkit-text-stroke:0.2px #505050;letter-spacing:0.28px">Rotate</div>
<div style="position:absolute;left:638.60px;top:306.10px;width:37.00px;height:20.00px;background:#ffffff;border-radius:5px;box-shadow:0 0.5px 0.5px rgba(0,0,0,0.06)"></div>
<svg style="position:absolute;left:651.80px;top:308.40px;overflow:visible" width="16.00" height="16.00" viewBox="0 0 16 16"><use href="#i-bookmark" style="color:#4d6494"/></svg>
<div style="position:absolute;left:456.90px;width:400px;top:331.65px;font:normal 10.1px/10.1px 'Liberation Sans', sans-serif;color:#505050;text-align:center;white-space:nowrap;-webkit-text-stroke:0.2px #505050;letter-spacing:0.28px">Bookmarks</div>
<div style="position:absolute;left:692.80px;top:306.20px;width:37.00px;height:20.00px;background:#ffffff;border-radius:5px;box-shadow:0 0.5px 0.5px rgba(0,0,0,0.06)"></div>
<svg style="position:absolute;left:704.00px;top:308.20px;overflow:visible" width="16.00" height="16.00" viewBox="0 0 16 16"><use href="#i-print" style="color:#2c52b6"/></svg>
<div style="position:absolute;left:511.50px;width:400px;top:331.65px;font:normal 10.1px/10.1px 'Liberation Sans', sans-serif;color:#505050;text-align:center;white-space:nowrap;-webkit-text-stroke:0.2px #505050;letter-spacing:0.28px">Print</div>
<div style="position:absolute;left:743.20px;top:307.10px;width:59.50px;height:21.30px;background:rgba(255,255,255,0.75);border-radius:5px;"></div>
<div style="position:absolute;left:772.20px;top:306.60px;width:1.60px;height:22.30px;background:#d2d2d2"></div>
<svg style="position:absolute;left:751.30px;top:310.20px;overflow:visible" width="16.00" height="16.00" viewBox="0 0 16 16"><use href="#i-save" style="color:#3d4c88"/></svg>
<svg style="position:absolute;left:780.20px;top:310.20px;overflow:visible" width="16.00" height="16.00" viewBox="0 0 16 16"><use href="#i-export" style="color:#3d4c88"/></svg>
<div style="position:absolute;left:569.80px;width:400px;top:331.65px;font:normal 10.1px/10.1px 'Liberation Sans', sans-serif;color:#505050;text-align:center;white-space:nowrap;-webkit-text-stroke:0.2px #505050;letter-spacing:0.28px">Export</div>
<div style="position:absolute;left:808.9px;top:305.7px;width:157.3px;height:20.3px;border-radius:5px;background:linear-gradient(#f2f2f2,#fafafa);box-shadow:0 0 0 0.5px rgba(0,0,0,0.15),0 0.5px 1px rgba(0,0,0,0.1)"></div>
<svg style="position:absolute;left:814.50px;top:310.00px" width="12.00" height="12.00" viewBox="0 0 16 16"><use href="#i-mag" style="color:#666666"/></svg>
<div style="position:absolute;left:831.00px;top:310.64px;font:normal 12px/12px 'Liberation Sans', sans-serif;color:#b4b4b4;white-space:pre;">Search</div>
<div style="position:absolute;left:687.70px;width:400px;top:331.65px;font:normal 10.1px/10.1px 'Liberation Sans', sans-serif;color:#505050;text-align:center;white-space:nowrap;-webkit-text-stroke:0.2px #505050;letter-spacing:0.28px">Search</div>
<div style="position:absolute;left:85.00px;top:360.80px;width:930.50px;height:1.00px;background:#e0e0e0"></div>
<div style="position:absolute;left:85.00px;top:365.80px;width:930.50px;height:0.80px;background:#ededed"></div>
<div style="position:absolute;left:111.70px;top:380.54px;font:bold 12px/12px 'Liberation Sans', sans-serif;color:#1c1c1c;white-space:pre;">Show</div>
<div style="position:absolute;left:152.8px;top:378.1px;width:116.8px;height:18.4px;border-radius:4px;background:#ffffff;box-shadow:0 0 0 0.5px rgba(0,0,0,0.25),0 0.5px 1px rgba(0,0,0,0.2)"></div>
<div style="position:absolute;left:253.9px;top:378.1px;width:15.7px;height:18.4px;border-radius:0 4px 4px 0;background:linear-gradient(#5aa6fa,#2a7ef0)"></div>
<svg style="position:absolute;left:253.9px;top:377.8px" width="15.7" height="18.6" viewBox="0 0 15.7 18.6"><path d="M5 7.5L7.85 4.8L10.7 7.5M5 11.1L7.85 13.8L10.7 11.1" fill="none" stroke="#fff" stroke-width="1.3"/></svg>
<div style="position:absolute;left:161.00px;top:381.24px;font:normal 12px/12px 'Liberation Sans', sans-serif;color:#262626;white-space:pre;letter-spacing:0.22px">Icon and Text</div>
<div style="position:absolute;left:277.4px;top:379.8px;width:12.2px;height:12.8px;border-radius:2.5px;background:#ffffff;box-shadow:0 0 0 0.8px rgba(0,0,0,0.4),0 0.5px 1px rgba(0,0,0,0.15)"></div>
<div style="position:absolute;left:294.60px;top:381.24px;font:normal 12px/12px 'Liberation Sans', sans-serif;color:#262626;white-space:pre;letter-spacing:0.08px">Use small size</div>
<div style="position:absolute;left:923px;top:377px;width:67px;height:19.4px;border-radius:4px;background:linear-gradient(#5aaaf8,#1d78ee);box-shadow:0 0.5px 1px rgba(0,0,0,0.25)"></div>
<div style="position:absolute;left:756.50px;width:400px;top:381.24px;font:normal 12px/12px 'Liberation Sans', sans-serif;color:#ffffff;text-align:center;white-space:nowrap;">Done</div>
</body></html>
